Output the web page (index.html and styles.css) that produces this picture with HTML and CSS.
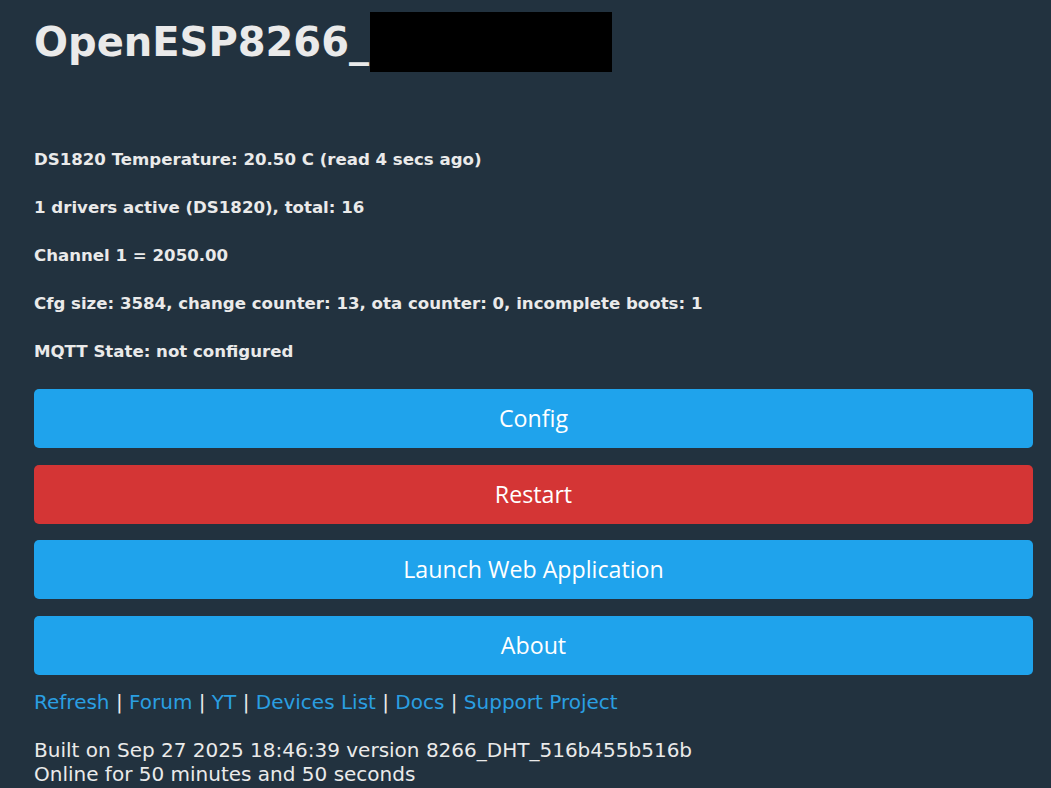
FILE: index.html
```html
<!DOCTYPE html>
<html lang="en">
<head>
  <meta charset="UTF-8">
  <meta name="viewport" content="width=device-width, initial-scale=1.0">
  <title>OpenESP8266</title>
  <link rel="stylesheet" href="styles.css">
</head>
<body>
  <div class="page">
    <h1 class="device-name">OpenESP8266_<span class="redacted"></span></h1>

    <div class="state">
      <p>DS1820 Temperature: 20.50 C (read 4 secs ago)</p>
      <p>1 drivers active (DS1820), total: 16</p>
      <p>Channel 1 = 2050.00</p>
      <p>Cfg size: 3584, change counter: 13, ota counter: 0, incomplete boots: 1</p>
      <p>MQTT State: not configured</p>
    </div>

    <form class="actions">
      <button type="button" class="btn">Config</button>
      <button type="button" class="btn btn-red">Restart</button>
      <button type="button" class="btn">Launch Web Application</button>
      <button type="button" class="btn">About</button>
    </form>

    <div class="links">
      <a href="#">Refresh</a> | <a href="#">Forum</a> | <a href="#">YT</a> | <a href="#">Devices List</a> | <a href="#">Docs</a> | <a href="#">Support Project</a>
    </div>

    <div class="footer">
      Built on Sep 27 2025 18:46:39 version 8266_DHT_516b455b516b<br>
      Online for 50 minutes and 50 seconds
    </div>
  </div>
</body>
</html>
```

FILE: styles.css
```css
body {
  margin: 0;
  background: #22323f;
  color: #eaeaea;
  font-family: "DejaVu Sans", Verdana, sans-serif;
  font-size: 20px;
}

.page {
  padding: 12px 18px 0 34px;
}

.device-name {
  margin: 0;
  font-size: 40px;
  line-height: 60px;
  display: flex;
  align-items: center;
}

.redacted {
  display: inline-block;
  width: 242px;
  height: 60px;
  margin-left: 1px;
  background: #000;
}

.state {
  margin-top: 64px;
  margin-bottom: 13px;
}

.state p {
  margin: 0;
  font-size: 16.6px;
  font-weight: bold;
  line-height: 48px;
}

.actions {
  display: flex;
  flex-direction: column;
  gap: 16.7px;
}

.btn {
  height: 59px;
  width: 100%;
  padding: 0 0 1px;
  border: none;
  border-radius: 5px;
  background: #1fa3ec;
  color: #fff;
  font-family: "Open Sans", sans-serif;
  font-size: 23.2px;
  cursor: pointer;
}

.btn-red {
  background: #d43535;
}

.links {
  margin-top: 15px;
  line-height: 24px;
}

.links a {
  color: #2a9fe2;
  text-decoration: none;
}

.footer {
  margin-top: 24px;
  line-height: 24px;
}
```
